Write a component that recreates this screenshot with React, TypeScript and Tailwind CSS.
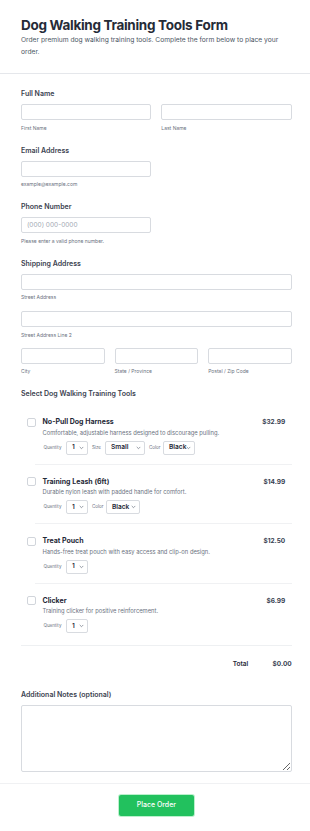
import React from "react";

const Label = ({ children, className = "" }: { children: React.ReactNode; className?: string }) => (
  <div className={"text-[7px] leading-[10px] font-semibold text-[#3b4250] " + className}>{children}</div>
);

const Sub = ({ children }: { children: React.ReactNode }) => (
  <div className="mt-[3.5px] text-[5px] leading-[8px] text-[#6b7280]">{children}</div>
);

const Input = ({ placeholder }: { placeholder?: string }) => (
  <input
    placeholder={placeholder}
    className="block h-[16px] w-full rounded-[2px] border border-[#d8dbe0] bg-white px-[5px] text-[6.5px] text-[#1f2937] outline-none placeholder:text-[#a3a9b3]"
  />
);

const Chevron = () => (
  <svg width="5" height="4" viewBox="0 0 5 4" fill="none" className="block shrink-0">
    <path d="M1 1.2 L2.5 2.7 L4 1.2" stroke="#6b7280" strokeWidth="0.7" strokeLinecap="round" strokeLinejoin="round" />
  </svg>
);

const Select = ({ value, cls }: { value: string; cls: string }) => (
  <div className={"flex h-[14px] shrink-0 items-center justify-between rounded-[2px] border border-[#d8dbe0] bg-white pl-[4.5px] pr-[3px] " + cls}>
    <span className="text-[6.6px] font-semibold leading-none text-[#1f2937]">{value}</span>
    <Chevron />
  </div>
);

const Tiny = ({ children, cls }: { children: React.ReactNode; cls: string }) => (
  <span className={"block text-[4.5px] leading-[14px] text-[#6b7280] " + cls}>{children}</span>
);

type Product = {
  name: string;
  desc: string;
  price: string;
  size?: boolean;
  colorCls?: string;
  color?: boolean;
};

const products: Product[] = [
  {
    name: "No-Pull Dog Harness",
    desc: "Comfortable, adjustable harness designed to discourage pulling.",
    price: "$32.99",
    size: true,
    color: true,
    colorCls: "ml-[3px] w-[31.5px]",
  },
  {
    name: "Training Leash (6ft)",
    desc: "Durable nylon leash with padded handle for comfort.",
    price: "$14.99",
    color: true,
    colorCls: "ml-[3px] w-[33.5px]",
  },
  {
    name: "Treat Pouch",
    desc: "Hands-free treat pouch with easy access and clip-on design.",
    price: "$12.50",
  },
  {
    name: "Clicker",
    desc: "Training clicker for positive reinforcement.",
    price: "$6.99",
  },
];

const ProductItem = ({ p }: { p: Product }) => (
  <div className="flex pl-[6px] pr-[6.5px] pt-[12px] pb-[9px]">
    <div className="mt-[0.5px] h-[9px] w-[9px] shrink-0 rounded-[2px] border border-[#d1d5db] bg-white" />
    <div className="ml-[6.5px] flex-1">
      <div className="flex items-start justify-between">
        <div className="text-[7px] font-bold leading-[10px] text-[#1f2937]">{p.name}</div>
        <div className="text-[6.5px] font-bold leading-[10px] text-[#374151]">{p.price}</div>
      </div>
      <div className="mt-[0.5px] text-[5.8px] leading-[9px] text-[#6b7280]">{p.desc}</div>
      <div className="mt-[4px] flex h-[14px] items-center">
        <Tiny cls="ml-[1px]">Quantity</Tiny>
        <Select value="1" cls="ml-[5px] w-[21.5px]" />
        {p.size && (
          <>
            <Tiny cls="ml-[4px]">Size</Tiny>
            <Select value="Small" cls="ml-[4.5px] w-[39.5px]" />
          </>
        )}
        {p.color && (
          <>
            <Tiny cls="ml-[4px]">Color</Tiny>
            <Select value="Black" cls={p.colorCls || "ml-[3px] w-[32px]"} />
          </>
        )}
      </div>
    </div>
  </div>
);

export default function App() {
  return (
    <div className="min-h-[831px] bg-white [font-family:Inter,'Noto_Sans',sans-serif]">
      <header className="border-b border-[#e5e7eb] pl-[21px] pr-[18px] pt-[16px] pb-[15px]">
        <h1 className="text-[13.5px] font-bold leading-[18px] tracking-[-0.3px] text-[#252b37]">
          Dog Walking Training Tools Form
        </h1>
        <p className="text-[6.7px] leading-[12px] text-[#4b5563]">
          Order premium dog walking training tools. Complete the form below to place your order.
        </p>
      </header>

      <main className="pl-[21px] pr-[18.3px] pt-[15px] pb-[10.5px]">
        <div className="flex flex-col gap-[14px]">
          <div>
            <Label className="mb-[5px]">Full Name</Label>
            <div className="grid grid-cols-2 gap-[10px]">
              <div>
                <Input />
                <Sub>First Name</Sub>
              </div>
              <div>
                <Input />
                <Sub>Last Name</Sub>
              </div>
            </div>
          </div>

          <div>
            <Label className="mb-[5px]">Email Address</Label>
            <div className="grid grid-cols-2 gap-[10px]">
              <div>
                <Input />
                <Sub>example@example.com</Sub>
              </div>
            </div>
          </div>

          <div>
            <Label className="mb-[5px]">Phone Number</Label>
            <div className="grid grid-cols-2 gap-[10px]">
              <div>
                <Input placeholder="(000) 000-0000" />
                <Sub>Please enter a valid phone number.</Sub>
              </div>
            </div>
          </div>

          <div>
            <Label className="mb-[5px]">Shipping Address</Label>
            <Input />
            <Sub>Street Address</Sub>
            <div className="mt-[10px]">
              <Input />
              <Sub>Street Address Line 2</Sub>
            </div>
            <div className="mt-[9px] grid grid-cols-3 gap-[10px]">
              <div>
                <Input />
                <Sub>City</Sub>
              </div>
              <div>
                <Input />
                <Sub>State / Province</Sub>
              </div>
              <div>
                <Input />
                <Sub>Postal / Zip Code</Sub>
              </div>
            </div>
          </div>

          <div>
            <Label>Select Dog Walking Training Tools</Label>
            <div className="mt-[6px] border-b border-[#eef0f2] pb-[2.5px]">
              {products.map((p, i) => (
                <React.Fragment key={p.name}>
                  {i > 0 && <div className="ml-[14px] h-px bg-[#f0f1f3]" />}
                  <ProductItem p={p} />
                </React.Fragment>
              ))}
            </div>
            <div className="flex items-center justify-end pt-[13.5px]">
              <span className="text-[6.5px] font-semibold leading-[10px] text-[#1f2937]">Total</span>
              <span className="w-[43.5px] text-right text-[6.5px] font-bold leading-[10px] text-[#374151]">$0.00</span>
            </div>
          </div>
        </div>

        <div className="mt-[21px]">
          <Label className="mb-[5px]">Additional Notes (optional)</Label>
          <textarea className="block h-[67px] w-full resize-y rounded-[2px] border border-[#d8dbe0] bg-white p-[4px] text-[7px] outline-none" />
        </div>
      </main>

      <footer className="flex justify-center border-t border-[#f0f1f3] pl-[21px] pr-[18.3px] pt-[11.5px] pb-[16px]">
        <button className="flex h-[20.5px] w-[75px] items-center justify-center rounded-[2px] bg-[#22c15e] text-[7px] font-medium text-white shadow-[0_0_0_1px_#bbf0cd]">
          Place Order
        </button>
      </footer>
    </div>
  );
}
